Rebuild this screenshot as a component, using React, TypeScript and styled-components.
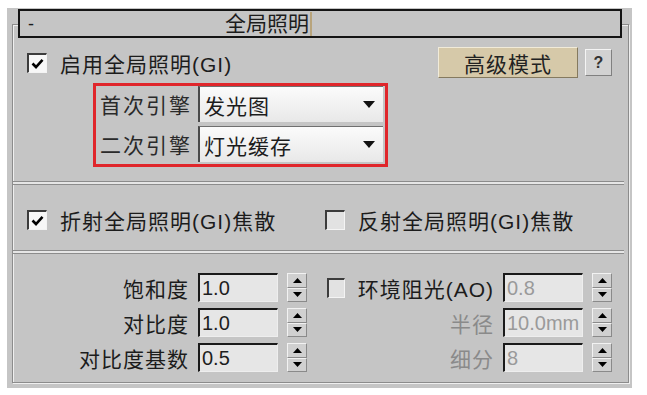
import styled, { createGlobalStyle } from 'styled-components';

const GlobalStyle = createGlobalStyle`
  html, body {
    margin: 0;
    padding: 0;
    background: #fff;
  }
  body {
    font-family: "Liberation Sans", "Noto Sans CJK SC", sans-serif;
  }
`;

const Panel = styled.div`
  margin: 8px 0 0 7px;
  width: 625px;
  height: 380px;
  box-sizing: border-box;
  padding: 16px 3px 0 5px;
  background: #c5c5c5;
`;

const Frame = styled.div`
  display: flex;
  flex-direction: column;
  height: 359px;
  box-sizing: border-box;
  border: 1px solid #8c8c8c;
  box-shadow: inset 1px 1px 0 #efefef, 1px 1px 0 #efefef;
`;

const TitleBar = styled.div`
  display: flex;
  align-items: center;
  height: 29px;
  margin: -16px 6px 0 5px;
  padding-left: 8px;
  box-sizing: border-box;
  border: 2px solid #141414;
  background: #c5c5c5;
  color: #1c1c1c;
`;

const Minus = styled.span`
  width: 8px;
  font-size: 18px;
  line-height: 1;
`;

const TitleText = styled.span`
  margin-left: 189px;
  padding-right: 1px;
  border-right: 2px solid #b8a47c;
  font-size: 21px;
  line-height: 24px;
`;

const Section = styled.div<{ $top: number; $bottom?: number }>`
  padding: ${(p) => p.$top}px 16px ${(p) => p.$bottom ?? 0}px 14px;
`;

const TopRow = styled.div`
  display: flex;
  align-items: center;
  height: 31px;
`;

const CheckItem = styled.label`
  display: flex;
  align-items: center;
  gap: 13px;
  font-size: 21px;
  letter-spacing: 1px;
  color: #1c1c1c;
  white-space: nowrap;
`;

const Box = styled.span<{ $checked?: boolean }>`
  display: flex;
  align-items: center;
  justify-content: center;
  width: 20px;
  height: 20px;
  box-sizing: border-box;
  border-top: 2px solid #3c3c3c;
  border-left: 2px solid #3c3c3c;
  border-right: 1px solid #f4f4f4;
  border-bottom: 1px solid #f4f4f4;
  background: ${(p) => (p.$checked ? '#f7f7f7' : '#e2e2e2')};
`;

const AdvancedButton = styled.button`
  margin-left: auto;
  width: 140px;
  height: 31px;
  padding: 0;
  border: 1px solid;
  border-color: #f1ebd9 #857a5f #857a5f #f1ebd9;
  background: #d6c9a9;
  color: #222;
  font-family: inherit;
  font-size: 21px;
  letter-spacing: 1px;
`;

const HelpButton = styled.button`
  margin-left: 7px;
  width: 27px;
  height: 27px;
  padding: 0;
  border: 1px solid;
  border-color: #f4f4f4 #808080 #808080 #f4f4f4;
  background: #d2d2d2;
  color: #333;
  font-family: "Liberation Sans", sans-serif;
  font-size: 16px;
  font-weight: bold;
`;

const EngineBox = styled.div`
  display: grid;
  grid-template-columns: 1fr 185px;
  column-gap: 6px;
  row-gap: 4px;
  align-content: start;
  align-items: center;
  width: 295px;
  height: 84px;
  box-sizing: border-box;
  margin: 5px 0 0 66px;
  padding: 0 2px 2px 4px;
  border: 3px solid #e0262b;
`;

const EngineLabel = styled.span`
  font-size: 21px;
  letter-spacing: 2px;
  color: #2a2a2a;
  white-space: nowrap;
`;

const Dropdown = styled.div`
  display: flex;
  align-items: center;
  justify-content: space-between;
  height: 36px;
  box-sizing: border-box;
  padding: 0 8px 0 4px;
  border-top: 1px solid #707070;
  border-left: 2px solid #4a4a4a;
  background: linear-gradient(#fbfbfb, #e8e8e8);
  font-size: 21px;
  letter-spacing: 1px;
  color: #1c1c1c;
`;

const Divider = styled.div<{ $top?: number }>`
  height: 2px;
  margin: ${(p) => p.$top ?? 0}px 4px 0 0;
  border-top: 1px solid #8c8c8c;
  border-bottom: 1px solid #8c8c8c;
  background: #e6e6e6;
`;

const CausticsRow = styled.div`
  display: grid;
  grid-template-columns: 298px auto;
  align-items: center;
  height: 26px;
`;

const ParamGrid = styled.div`
  display: grid;
  grid-template-columns: 162px 80px 20px 178px 80px 20px;
  grid-auto-rows: 29px;
  column-gap: 9px;
  row-gap: 6px;
  align-items: center;
`;

const ParamLabel = styled.span<{ $disabled?: boolean }>`
  justify-self: end;
  font-size: 21px;
  letter-spacing: 1px;
  color: ${(p) => (p.$disabled ? '#8a8a8a' : '#1c1c1c')};
  white-space: nowrap;
`;

const AoCell = styled.div`
  padding-left: 11px;
`;

const Field = styled.div<{ $disabled?: boolean }>`
  display: flex;
  align-items: center;
  height: 29px;
  box-sizing: border-box;
  padding-left: 2px;
  border-top: 2px solid #1a1a1a;
  border-left: 2px solid #1a1a1a;
  border-right: 1px solid #eeeeee;
  border-bottom: 1px solid #eeeeee;
  background: #e6e6e6;
  font-size: 20px;
  color: ${(p) => (p.$disabled ? '#9a9a9a' : '#1e1e1e')};
`;

const Spinner = styled.div`
  display: flex;
  flex-direction: column;
  height: 29px;
`;

const SpinHalf = styled.span`
  flex: 1;
  display: flex;
  align-items: center;
  justify-content: center;
  box-sizing: border-box;
  border: 1px solid;
  border-color: #f2f2f2 #8a8a8a #8a8a8a #f2f2f2;
  background: #d0d0d0;
`;

const Check = () => (
  <svg width="13" height="11" viewBox="0 0 13 11">
    <path d="M1.5 5.5 L5 9 L11.5 1.8" fill="none" stroke="#000" strokeWidth="2.6" />
  </svg>
);

const Arrow = ({ up }: { up?: boolean }) => (
  <svg width="9" height="5" viewBox="0 0 9 5">
    <path d={up ? 'M0 5 L4.5 0 L9 5 Z' : 'M0 0 L9 0 L4.5 5 Z'} fill="#000" />
  </svg>
);

const DropArrow = () => (
  <svg width="12" height="7" viewBox="0 0 12 7">
    <path d="M0 0 L12 0 L6 7 Z" fill="#111" />
  </svg>
);

const CheckBox = ({ checked }: { checked?: boolean }) => (
  <Box $checked={checked}>{checked && <Check />}</Box>
);

const Spin = () => (
  <Spinner>
    <SpinHalf>
      <Arrow up />
    </SpinHalf>
    <SpinHalf>
      <Arrow />
    </SpinHalf>
  </Spinner>
);

const App = () => {
  return (
    <>
      <GlobalStyle />
      <Panel>
        <Frame>
          <TitleBar>
            <Minus>-</Minus>
            <TitleText>全局照明</TitleText>
          </TitleBar>

          <Section $top={9}>
            <TopRow>
              <CheckItem>
                <CheckBox checked />
                启用全局照明(GI)
              </CheckItem>
              <AdvancedButton>高级模式</AdvancedButton>
              <HelpButton>?</HelpButton>
            </TopRow>
            <EngineBox>
              <EngineLabel>首次引擎</EngineLabel>
              <Dropdown>
                发光图
                <DropArrow />
              </Dropdown>
              <EngineLabel>二次引擎</EngineLabel>
              <Dropdown>
                灯光缓存
                <DropArrow />
              </Dropdown>
            </EngineBox>
          </Section>

          <Divider $top={14} />

          <Section $top={20} $bottom={19}>
            <CausticsRow>
              <CheckItem>
                <CheckBox checked />
                折射全局照明(GI)焦散
              </CheckItem>
              <CheckItem>
                <CheckBox />
                反射全局照明(GI)焦散
              </CheckItem>
            </CausticsRow>
          </Section>

          <Divider />

          <Section $top={19}>
            <ParamGrid>
              <ParamLabel>饱和度</ParamLabel>
              <Field>1.0</Field>
              <Spin />
              <AoCell>
                <CheckItem>
                  <CheckBox />
                  环境阻光(AO)
                </CheckItem>
              </AoCell>
              <Field $disabled>0.8</Field>
              <Spin />

              <ParamLabel>对比度</ParamLabel>
              <Field>1.0</Field>
              <Spin />
              <ParamLabel $disabled>半径</ParamLabel>
              <Field $disabled>10.0mm</Field>
              <Spin />

              <ParamLabel>对比度基数</ParamLabel>
              <Field>0.5</Field>
              <Spin />
              <ParamLabel $disabled>细分</ParamLabel>
              <Field $disabled>8</Field>
              <Spin />
            </ParamGrid>
          </Section>
        </Frame>
      </Panel>
    </>
  );
};

export default App;
